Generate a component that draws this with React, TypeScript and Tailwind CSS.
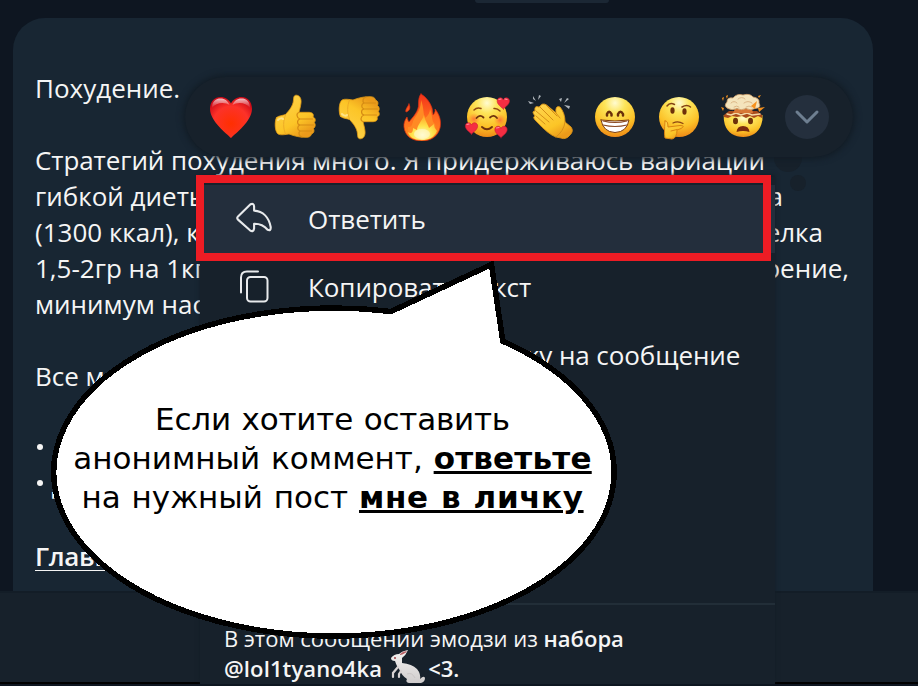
import type { ReactNode } from "react";

function Gradients() {
  return (
    <svg className="absolute h-0 w-0">
      <defs>
        <radialGradient id="face" cx="0.5" cy="0.15" r="0.85">
          <stop offset="0" stopColor="#fffbd0" />
          <stop offset="0.3" stopColor="#fde55a" />
          <stop offset="0.7" stopColor="#fcc127" />
          <stop offset="1" stopColor="#ee8a17" />
        </radialGradient>
        <linearGradient id="hand" x1="0" y1="0" x2="0.6" y2="1">
          <stop offset="0" stopColor="#ffd552" />
          <stop offset="0.7" stopColor="#fcc527" />
          <stop offset="1" stopColor="#eb9a1a" />
        </linearGradient>
        <radialGradient id="heart" cx="0.5" cy="0.65" r="0.65">
          <stop offset="0" stopColor="#ff2f00" />
          <stop offset="0.65" stopColor="#fc3229" />
          <stop offset="1" stopColor="#cf0b18" />
        </radialGradient>
        <linearGradient id="shine" x1="0" y1="0" x2="0" y2="1">
          <stop offset="0" stopColor="#fff" stopOpacity="0.75" />
          <stop offset="1" stopColor="#fff" stopOpacity="0" />
        </linearGradient>
        <linearGradient id="flame" x1="0" y1="0" x2="0" y2="1">
          <stop offset="0" stopColor="#f3321a" />
          <stop offset="0.5" stopColor="#ff6a1e" />
          <stop offset="1" stopColor="#ff8f1c" />
        </linearGradient>
        <radialGradient id="core" cx="0.5" cy="0.8" r="0.7">
          <stop offset="0" stopColor="#fffbd2" />
          <stop offset="0.5" stopColor="#ffe44d" />
          <stop offset="1" stopColor="#ffad2b" />
        </radialGradient>
        <radialGradient id="blush">
          <stop offset="0" stopColor="#ff5a36" stopOpacity="0.75" />
          <stop offset="1" stopColor="#ff7a30" stopOpacity="0" />
        </radialGradient>
        <linearGradient id="fur" x1="0" y1="0" x2="0" y2="1">
          <stop offset="0" stopColor="#f5f3f2" />
          <stop offset="1" stopColor="#cfcccc" />
        </linearGradient>
      </defs>
    </svg>
  );
}

function Glyph({ children }: { children: ReactNode }) {
  return (
    <svg viewBox="0 0 48 48" className="h-12 w-12 shrink-0" fill="none" strokeLinecap="round" strokeLinejoin="round">
      {children}
    </svg>
  );
}

const Heart = () => (
  <Glyph>
    <path d="M24 45C20 41 3 28 3 16C3 8 8 4 13.500 4C18 4 22 6.500 24 10.500C26 6.500 30 4 34.500 4C40 4 45 8 45 16C45 28 28 41 24 45Z" fill="url(#heart)" />
    <path d="M5 15C5 8 9 5.500 13.500 5.500C18 5.500 21 8 22.500 12C18 9 9 9 5 15ZM25.500 12C27 8 30 5.500 34.500 5.500C39 5.500 43 8 43 15C39 9 30 9 25.500 12Z" fill="url(#shine)" />
  </Glyph>
);

const ThumbShape = () => (
  <>
    <path d="M5.500 24.500C8 22.500 12 22.500 14.500 21.500C18.500 17 22 13 22.500 7C22.600 3 23.500 2.200 25.500 2.200C29 2.500 30.500 6 30 10C29.500 14 28.500 17 28 19.300H38C42 19.500 43 21.500 42 24C44.500 25 45 27.500 43.300 29.500C44.800 31.500 44.500 34 42.500 35.500C43.500 38 43 40 40.500 41C40 43.500 38 44.300 35 44.300C29 44.500 23 43 18 41C14 41.500 10 42.500 7 41C3.500 38 3.500 28 5.500 24.500Z" fill="url(#hand)" stroke="#e39a14" strokeWidth="0.8" />
    <path d="M14.500 22C12 28 12 35 14.500 41" stroke="#e8a425" strokeWidth="0.800" />
    <path d="M28 19.500C25 20 25.500 25 29 26H41.500M29 26C25.500 27 26 31.500 29 32H42.500M29 32C26 33 26 37 29 38H40.500M29 38C27 39.500 28 43.500 31 44" stroke="#d58b14" strokeWidth="1.200" />
    <path d="M7 27C9 25 11 25 12 26" stroke="#ffe388" strokeWidth="2" />
  </>
);

const ThumbUp = () => <Glyph><ThumbShape /></Glyph>;
const ThumbDown = () => <Glyph><g transform="matrix(1 0 0 -1 0 48)"><ThumbShape /></g></Glyph>;

const Fire = () => (
  <Glyph>
    <path d="M22 1C27 4 31 9 33 15C33.500 18 34 20 34 22C36 20 36.500 18 36 16C41 22 42.500 29 41 35C39 43 32 48 23 48C13 48 6 43 5 34C4.500 30 6 27 8 24C8.500 26 9 28 10 29C14 24 20 18 19.500 11C19.500 7 20 3 22 1ZM10 11C12 15 10.500 18 7 19C6 16 9 14 10 11Z" fill="url(#flame)" stroke="#dc2c11" strokeWidth="0.700" />
    <path d="M22 7C25 15 24 20 26 25C29 23 31 19 31 16C34 23 32 28 36 31C38 36 34 46 23 47C13 46 8 39 9 34C14 35 13 29 15 26C19 20 22 15 22 7Z" fill="#ff8a24" />
    <path d="M25 22C26 28 29 31 30 35L35 31C35 35 37 36 38 38C35 45 29 47 23 47C15 47 10 44 9 39C12 41 14 40 14 35L18 37C18 32 23 28 25 22Z" fill="url(#core)" />
    <ellipse cx="23" cy="41" rx="8" ry="5" fill="#fffad0" opacity="0.6" />
  </Glyph>
);

const smallHeart = "M0 6C-2 4-7 1-6-3C-5-6-1-6 0-3C1-6 5-6 6-3C7 1 2 4 0 6Z";

const Adore = () => (
  <Glyph>
    <circle cx="24" cy="24" r="20" fill="url(#face)" />
    <circle cx="11" cy="26" r="6" fill="url(#blush)" /><circle cx="37" cy="27" r="6" fill="url(#blush)" />
    <path d="M11 17Q14 14 18 15.500M31 15.500Q34 15 37 18" stroke="#8f4912" strokeWidth="1.500" />
    <path d="M13.500 25Q17 21 20.500 24.500M27 24.500Q31 21 34 25" stroke="#70330d" strokeWidth="1.800" />
    <path d="M19 34Q24 38.500 29 34" stroke="#70330d" strokeWidth="1.900" />
    <g fill="#f52d42" stroke="#cf1a32" strokeWidth="0.600">
      <path transform="translate(40.300 10)" d={smallHeart} />
      <path transform="translate(8.500 35)" d={smallHeart} />
      <path transform="translate(38 38.500)" d={smallHeart} />
    </g>
    <path d="M36 6.500L38 6M42 6L44 6.500M4 31.500L6 31M33.500 35L36 34.500" stroke="#ff909a" strokeWidth="1.200" />
  </Glyph>
);

const Clap = () => (
  <Glyph>
    <path d="M14 12Q17 9 22 14L29 20Q28 12 33 14Q38 20 38 29L44 34Q47 38 43 42Q39 47 34 45L29 44Q22 42 9 28Q5 24 8 23Q4 18 8 18Q7 12 12 14Z" fill="url(#hand)" stroke="#dd9416" strokeWidth="0.900" />
    <path d="M9 23L18 31M9 18L22 29M13 14L26 27M19 12L30 23M29 20L33 25M38 29Q37 38 29 44" stroke="#d58f18" strokeWidth="1" />
    <path d="M1 8L7 10L3 11ZM6 3L9 8L6 6ZM12 2L14 3L11 7ZM32 6L35 5L34 9ZM40 5L42 6L37 10ZM37 12L43 13L42 16Z" fill="#aeb4ba" />
  </Glyph>
);

const Grin = () => (
  <Glyph>
    <circle cx="24" cy="24" r="20" fill="url(#face)" />
    <path d="M16 22.500V21Q18 16.500 20.500 21V22.500M27 22.500V21Q29.500 16.500 32 21V22.500" stroke="#6a2f0a" strokeWidth="2.500" />
    <path d="M10 27Q24 29 38 27Q36 39 24 39.500Q12 39 10 27Z" fill="#fff" stroke="#7d3c0e" strokeWidth="1" />
    <path d="M12 32Q24 35 36 32M12 28Q24 31 36 28" stroke="#8b4b24" strokeWidth="1.100" />
  </Glyph>
);

const Think = () => (
  <Glyph>
    <circle cx="24" cy="24" r="20" fill="url(#face)" />
    <path d="M12 13Q15 9 19.500 11.500M27 14Q32 11 35.500 14" stroke="#854414" strokeWidth="1.500" />
    <ellipse cx="17.500" cy="17.500" rx="2.100" ry="3.200" fill="#6e310a" />
    <ellipse cx="29.500" cy="18.500" rx="2.100" ry="3.200" fill="#6e310a" />
    <path d="M18 30Q23 27.500 28 30.500" stroke="#8b4312" strokeWidth="1.200" />
    <path d="M10 28Q13 27 13 34L25 32.500Q31 32.500 26 35.500L22 37Q22 45 17 46L10 45Q9 41 10 28Z" fill="url(#hand)" stroke="#d98411" strokeWidth="1" />
    <path d="M16 38L22 36.500" stroke="#d98411" strokeWidth="1" />
  </Glyph>
);

const MindBlown = () => (
  <Glyph>
    <path d="M4.700 22H43.500Q44 27 42.300 31.500C39.500 40 32 44 24.200 44C16 44 8.500 40 5.800 31.500Q4.500 27 4.700 22Z" fill="url(#face)" />
    <path d="M5 22L10 18H38L43 22L43 25L39 23L35 25L31 23L27 25L23 23L18 24L13 23L9 25L5 24Z" fill="#a94b1b" />
    <path d="M8 21L12 22L17 20L22 22L28 20L33 22L41 21" stroke="#f3d7a4" strokeWidth="1.400" />
    <path d="M16 16H33L34 20H14Z" fill="#d77735" />
    <path d="M9 15.500Q4 13 8 9Q8 4 14 5Q18 0 24 2Q31 0 34 4Q41 5 40 10Q43 15 36 15.500Q31 18 27 15.500Q22 18 18 15.500Q13 18 9 15.500Z" fill="#f4e4bc" stroke="#ce9d68" strokeWidth="0.800" />
    <path d="M12 10Q15 7 18 10M19 6Q23 3 26 6M25 10Q29 7 33 10M15 14Q18 12 20 14M27 14Q30 12 33 14" stroke="#d8b080" strokeWidth="0.900" />
    <path d="M2 14L5 15L4 18ZM7 3L9 2L8 6ZM3 5L5 4L4 8ZM39 3L42 2L40 5ZM39 15L46 14L40 19ZM32 13L38 8L36 16Z" fill="#f6911d" />
    <ellipse cx="16.500" cy="28" rx="2.500" ry="3.200" fill="#6e310a" /><ellipse cx="31.500" cy="28" rx="2.500" ry="3.200" fill="#6e310a" />
    <path d="M17.500 39Q18 33 24 33Q30 33 30.500 39Q24 37 17.500 39Z" fill="#7b2b0c" />
  </Glyph>
);

const Rabbit = () => (
  <svg viewBox="0 0 36 34" className="mr-[2px] ml-2 -mt-[3px] h-[34px] w-9 shrink-0" fill="none">
    <path d="M5 11Q1 11 1 8Q4 4 9 4Q12 1 18 0Q16 5 12 8L12 13Q22 14 27 19Q31 24 30 29Q34 25 35 28Q35 32 31 33H19Q15 32 17 29Q12 26 9 19Q7 17 5 11Z" fill="url(#fur)" />
    <path d="M8 17L3 23L3 27M11 21L9 24L9 27" stroke="#d8d3d3" strokeWidth="2.200" strokeLinecap="round" />
    <path d="M10 4Q13 1 17 1Q15 4 10 5Z" fill="#b96065" />
    <circle cx="5" cy="8" r="0.900" fill="#922c31" />
    <path d="M17 24Q22 22 25 28" stroke="#c9c5c5" />
  </svg>
);

const ReplyIcon = () => (
  <svg viewBox="0 0 38 34" className="-mt-0.5 h-[34px] w-[38px]" fill="none" stroke="#e8eaec" strokeWidth="2.100" strokeLinejoin="round">
    <path d="M3 15.400L15.500 3.300Q18.900 1.800 19.100 5.500V9.600C28 10.200 34 16.500 35.700 26Q36 30.300 32.600 28.800C28.500 24 25 22.600 19.100 22.800V27.500Q18.500 31.500 15 29.300L3 18.600Q1.500 17 3 15.400Z" />
  </svg>
);

const CopyIcon = () => (
  <svg viewBox="0 0 38 34" className="-mt-0.5 h-[34px] w-[38px]" fill="none" stroke="#e8eaec" strokeWidth="2" strokeLinecap="round">
    <rect x="12" y="8" width="20.500" height="24.500" rx="3.500" />
    <path d="M6 23.500V8.500Q6 2.400 12 2.400H23" />
  </svg>
);

const reactions = [Heart, ThumbUp, ThumbDown, Fire, Adore, Clap, Grin, Think, MindBlown];

export default function App() {
  return (
    <div className="relative flex h-[686px] w-[918px] flex-col overflow-hidden bg-[#0e1621] font-['Open_Sans','Noto_Sans',sans-serif] text-[#f5f5f5]">
      <Gradients />
      <div className="ml-[475px] h-[3px] w-[134px] shrink-0 rounded-b-full bg-[#1b2734]" />

      <main className="mt-[15px] ml-[13px] h-[573px] w-[860px] shrink-0 rounded-t-[32px] bg-[#182633] pt-[52px] pl-[22px] text-[26px] leading-9 whitespace-nowrap">
        <p>Похудение.</p>
        <p className="mt-9 tracking-[-0.09px]">Стратегий похудения много. Я придерживаюсь вариации</p>
        <p className="flex w-[748px] justify-between"><span>гибкой диеты</span><span>а</span></p>
        <p className="flex w-[788px] justify-between"><span>(1300 ккал), к</span><span>елка</span></p>
        <p className="flex w-[814px] justify-between"><span>1,5-2гр на 1кг</span><span>рение,</span></p>
        <p>минимум нас</p>
        <p className="mt-9">Все м</p>
        <ul className="mt-9">
          <li className="flex h-9 items-center pl-[2px]"><i className="-mt-[3px] h-1.5 w-1.5 rounded-full bg-[#f5f5f5]" /></li>
          <li className="flex h-9 items-center pl-[2px]"><i className="-mt-[3px] mr-[9px] h-1.5 w-1.5 rounded-full bg-[#f5f5f5]" /><span>Д</span></li>
        </ul>
        <p className="mt-9 font-semibold tracking-[-0.3px] underline decoration-1 underline-offset-4">Главная</p>
      </main>

      <footer className="h-[93px] shrink-0 border-t-2 border-b-2 border-t-[#131d27] border-b-black bg-[#17212b]" />

      <section className="absolute top-[177px] left-[200px] flex h-[507px] w-[575px] flex-col bg-[#17212b] pt-2 text-[26px] tracking-[-0.08px] whitespace-nowrap shadow-[0_-2px_4px_#131d26]">
        <div className="flex h-[68px] shrink-0 items-center bg-[#232e3c] pl-[35px]"><ReplyIcon /><span className="ml-[35px]">Ответить</span></div>
        <div className="flex h-[68px] shrink-0 items-center pl-[35px]"><CopyIcon /><span className="ml-[35px]">Копировать текст</span></div>
        <div className="flex h-[68px] shrink-0 items-center pl-[108px]">Копировать ссылку на сообщение</div>
        <div className="mt-[214px] h-0.5 shrink-0 bg-[#222e38]" />
        <div className="mt-[18px] pl-6 text-[22px] leading-[30px] tracking-normal">
          <p>В этом сообщении эмодзи из <b className="font-semibold">набора</b></p>
          <p className="flex h-[30px] font-semibold"><span className="tracking-[0.12px]">@lol1tyano4ka</span><Rabbit /><span>&lt;3.</span></p>
        </div>
      </section>

      <div className="absolute top-[144px] left-[774px] h-7 w-7 rounded-full bg-[#17212b]" />
      <div className="absolute top-[175px] left-[790px] h-4 w-4 rounded-full bg-[#17212b]" />
      <nav className="absolute top-[77px] left-[185px] flex h-20 w-[668px] items-center gap-4 rounded-full bg-[#17212b] pl-[22px] shadow-[0_0_6px_2px_#121c25]">
        {reactions.map((Reaction, index) => <Reaction key={index} />)}
        <button className="ml-0.5 flex h-11 w-11 items-center justify-center rounded-full bg-[#242f3d]">
          <svg viewBox="0 0 28 18" className="h-[18px] w-7" fill="none" stroke="#6e7f91" strokeWidth="3" strokeLinecap="round" strokeLinejoin="round"><path d="M4 4L14 14L24 4" /></svg>
        </button>
      </nav>

      <div className="absolute top-[175px] left-[196px] h-[86px] w-[575px] border-8 border-[#ed1c24]" />

      <aside className="absolute top-[258px] left-[50px] h-[386px] w-[570px] text-black">
        <svg viewBox="50 258 570 386" className="absolute inset-0 h-full w-full" shapeRendering="crispEdges">
          <path d="M391 311.500L491.500 264.500L502.800 341.200A280.200 164 0 1 1 391 311.500Z" fill="white" stroke="black" strokeWidth="5.500" />
        </svg>
        <div className="relative flex flex-col items-center pt-[142px] pr-[5px] font-['DejaVu_Sans',sans-serif] text-[31px] leading-[39px] whitespace-nowrap [word-spacing:1px]">
          <p className="tracking-[-0.2px]">Если хотите оставить</p>
          <p>анонимный коммент, <b className="tracking-[0.2px] underline">ответьте</b></p>
          <p>на нужный пост <b className="tracking-[0.6px] underline">мне в личку</b></p>
        </div>
      </aside>
    </div>
  );
}
